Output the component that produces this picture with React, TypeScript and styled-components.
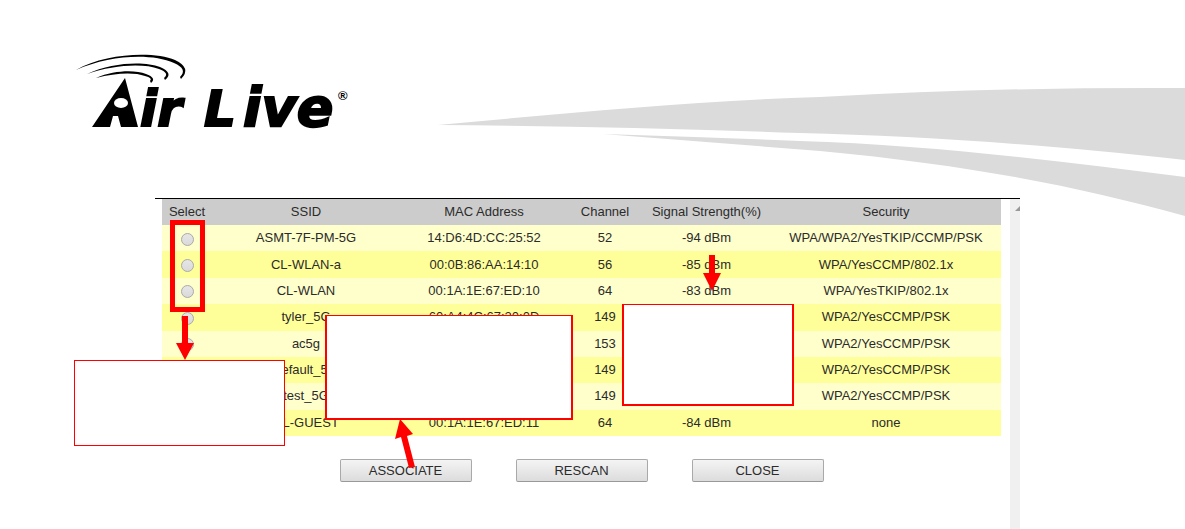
import React from "react";
import styled, { createGlobalStyle } from "styled-components";

const GlobalStyle = createGlobalStyle`
  *, *::before, *::after { box-sizing: border-box; }
  body {
    margin: 0;
    background: #fff;
    color: #2b2b2b;
    font-family: "Liberation Sans", Arial, sans-serif;
    font-size: 13px;
  }
`;

const Page = styled.div`
  display: flex;
  flex-direction: column;
  min-height: 100vh;
  overflow-x: hidden;
`;

const Header = styled.header`
  display: flex;
  align-items: flex-start;
  height: 198px;
`;

const Logo = styled.svg`
  flex: none;
  width: 290px;
  height: 90px;
  margin: 48px 78px 0 70px;
  overflow: visible;
`;

const LogoWord = styled.text`
  font-family: "DejaVu Sans", sans-serif;
  font-weight: 700;
  font-style: italic;
  stroke: #000;
  stroke-width: 2px;
`;

const Swoosh = styled.svg`
  flex: 1;
  min-width: 0;
  height: 130px;
  margin-top: 87px;
`;

const Panel = styled.main`
  position: relative;
  flex: 1;
  display: flex;
  gap: 9px;
  margin: 0 165px 0 155px;
  padding-left: 7px;
  border-top: 1px solid #000;
`;

const Content = styled.div`
  flex: 1;
  min-width: 0;
`;

const ScrollTrack = styled.div`
  width: 10px;
  padding: 7px 0 0 5px;
  overflow: hidden;
  background: #f0f0f0;
`;

const ScrollArrow = styled.svg`
  display: block;
  width: 10px;
  height: 5px;
`;

const NetworkTable = styled.table`
  width: 100%;
  height: 237px;
  table-layout: fixed;
  border-collapse: collapse;
  text-align: center;
`;

const Column = styled.col<{ $width?: number }>`
  width: ${(p) => (p.$width ? `${p.$width}px` : "auto")};
`;

const HeadCell = styled.th`
  height: 26px;
  padding: 0;
  background: #ccc;
  font-weight: 400;
  line-height: 16px;
  white-space: nowrap;
`;

const Row = styled.tr`
  background: #ffc;
  &:nth-child(even) { background: #ff9; }
`;

const Cell = styled.td`
  padding: 0;
  line-height: 16px;
  white-space: nowrap;
`;

const Radio = styled.input`
  appearance: none;
  display: block;
  width: 13px;
  height: 13px;
  margin: 2px auto 0;
  border: 1px solid #aaa;
  border-radius: 50%;
  background: linear-gradient(#e6e6e6, #dadada);
`;

const Actions = styled.div`
  display: flex;
  justify-content: center;
  gap: 44px;
  margin-top: 23px;
`;

const ActionButton = styled.button`
  width: 132px;
  height: 23px;
  padding: 0;
  border: 1px solid #a9a9a9;
  border-bottom-color: #999;
  border-radius: 2px;
  background: linear-gradient(#f4f4f4, #dcdcdc);
  color: #2b2b2b;
  font: 13px/21px "Liberation Sans", Arial, sans-serif;
`;

/* Annotation boxes float over the dialog. */
const Callout = styled.div<{ $x: number; $y: number; $w: number; $h: number; $border: string }>`
  position: absolute;
  left: ${(p) => p.$x}px;
  top: ${(p) => p.$y}px;
  width: ${(p) => p.$w}px;
  height: ${(p) => p.$h}px;
  border: solid #f00;
  border-width: ${(p) => p.$border};
  background: #fff;
`;

const Highlight = styled(Callout)`
  background: transparent;
  pointer-events: none;
`;

const Arrows = styled.svg`
  position: absolute;
  left: 0;
  top: 0;
  width: 600px;
  height: 290px;
  pointer-events: none;
`;

const networks = [
  { ssid: "ASMT-7F-PM-5G", mac: "14:D6:4D:CC:25:52", channel: 52, signal: "-94 dBm", security: "WPA/WPA2/YesTKIP/CCMP/PSK" },
  { ssid: "CL-WLAN-a", mac: "00:0B:86:AA:14:10", channel: 56, signal: "-85 dBm", security: "WPA/YesCCMP/802.1x" },
  { ssid: "CL-WLAN", mac: "00:1A:1E:67:ED:10", channel: 64, signal: "-83 dBm", security: "WPA/YesTKIP/802.1x" },
  { ssid: "tyler_5G", mac: "60:A4:4C:67:20:0D", channel: 149, signal: "", security: "WPA2/YesCCMP/PSK" },
  { ssid: "ac5g", mac: "", channel: 153, signal: "", security: "WPA2/YesCCMP/PSK" },
  { ssid: "default_5G", mac: "", channel: 149, signal: "", security: "WPA2/YesCCMP/PSK" },
  { ssid: "test_5G", mac: "", channel: 149, signal: "", security: "WPA2/YesCCMP/PSK" },
  { ssid: "CL-GUEST", mac: "00:1A:1E:67:ED:11", channel: 64, signal: "-84 dBm", security: "none" },
];

const headings = ["Select", "SSID", "MAC Address", "Channel", "Signal Strength(%)", "Security"];

export default function App() {
  return (
    <Page>
      <GlobalStyle />
      <Header>
        <Logo viewBox="70 48 290 90" role="img" aria-label="Air Live">
          <path d="M76 70C105 53 154 51 175 60Q192 68 181 79L180 77Q188 69 174 63C151 53 110 55 76 70Z" />
          <path d="M87 74C112 62 145 61 160 67Q174 73 165 80L164 78Q170 73 159 69C143 63 113 65 87 74Z" />
          <path d="M96 78C115 70 135 70 146 74Q157 78 151 83L150 81Q153 78 145 76C134 72 115 73 96 78Z" />
          <path d="M125 78L138 127H121L118 116H113L110 127H92Z" />
          <ellipse cx="121" cy="103" rx="7" ry="5" fill="#fff" />
          <LogoWord x="140" y="126" fontSize="50">ir</LogoWord>
          <LogoWord x="204" y="126" fontSize="50">L</LogoWord>
          <LogoWord x="243" y="126" fontSize="54">ive</LogoWord>
          <text x="338" y="100" fontSize="13" fontWeight="700">®</text>
        </Logo>
        <Swoosh viewBox="438 87 747 130" preserveAspectRatio="none" aria-hidden="true">
          <path fill="#dbdbdb" d="M438 125C560 114 690 101 820 97Q1000 87 1185 88V160C1040 144 920 136 800 133Q610 126 438 125Z" />
          <path fill="#dbdbdb" d="M603 134Q700 137 800 141C930 145 1060 161 1185 177V216C1080 187 970 165 820 151Z" />
        </Swoosh>
      </Header>

      <Panel>
        <Content>
          <NetworkTable>
            <colgroup>
              <Column $width={50} />
              <Column $width={188} />
              <Column $width={168} />
              <Column $width={74} />
              <Column $width={129} />
              <Column />
            </colgroup>
            <thead>
              <tr>
                {headings.map((h) => (
                  <HeadCell key={h} scope="col">{h}</HeadCell>
                ))}
              </tr>
            </thead>
            <tbody>
              {networks.map((n) => (
                <Row key={n.ssid}>
                  <Cell><Radio type="radio" name="network" aria-label={n.ssid} /></Cell>
                  <Cell>{n.ssid}</Cell>
                  <Cell>{n.mac}</Cell>
                  <Cell>{n.channel}</Cell>
                  <Cell>{n.signal}</Cell>
                  <Cell>{n.security}</Cell>
                </Row>
              ))}
            </tbody>
          </NetworkTable>
          <Actions>
            <ActionButton type="button">ASSOCIATE</ActionButton>
            <ActionButton type="button">RESCAN</ActionButton>
            <ActionButton type="button">CLOSE</ActionButton>
          </Actions>
        </Content>
        <ScrollTrack aria-hidden="true">
          <ScrollArrow viewBox="0 0 10 5"><path d="M0 5L5 0L10 5Z" fill="#999" /></ScrollArrow>
        </ScrollTrack>

        <Highlight $x={15} $y={21} $w={35} $h={92} $border="5px" />
        <Callout $x={-81} $y={161} $w={211} $h={86} $border="1px" />
        <Callout $x={170} $y={116} $w={248} $h={105} $border="1px 2px 2px 2px" />
        <Callout $x={467} $y={105} $w={172} $h={102} $border="1px 2px 2px 2px" />
        <Arrows viewBox="155 199 600 290" aria-hidden="true">
          <g fill="#f00">
            <path d="M182 316H188V343H194L185 360L176 343H182Z" />
            <path d="M709 255H715V273H721L712 291L703 273H709Z" />
            <path d="M400 419L413 434L407 436L415 467L409 468L401 437L395 439Z" />
          </g>
        </Arrows>
      </Panel>
    </Page>
  );
}
